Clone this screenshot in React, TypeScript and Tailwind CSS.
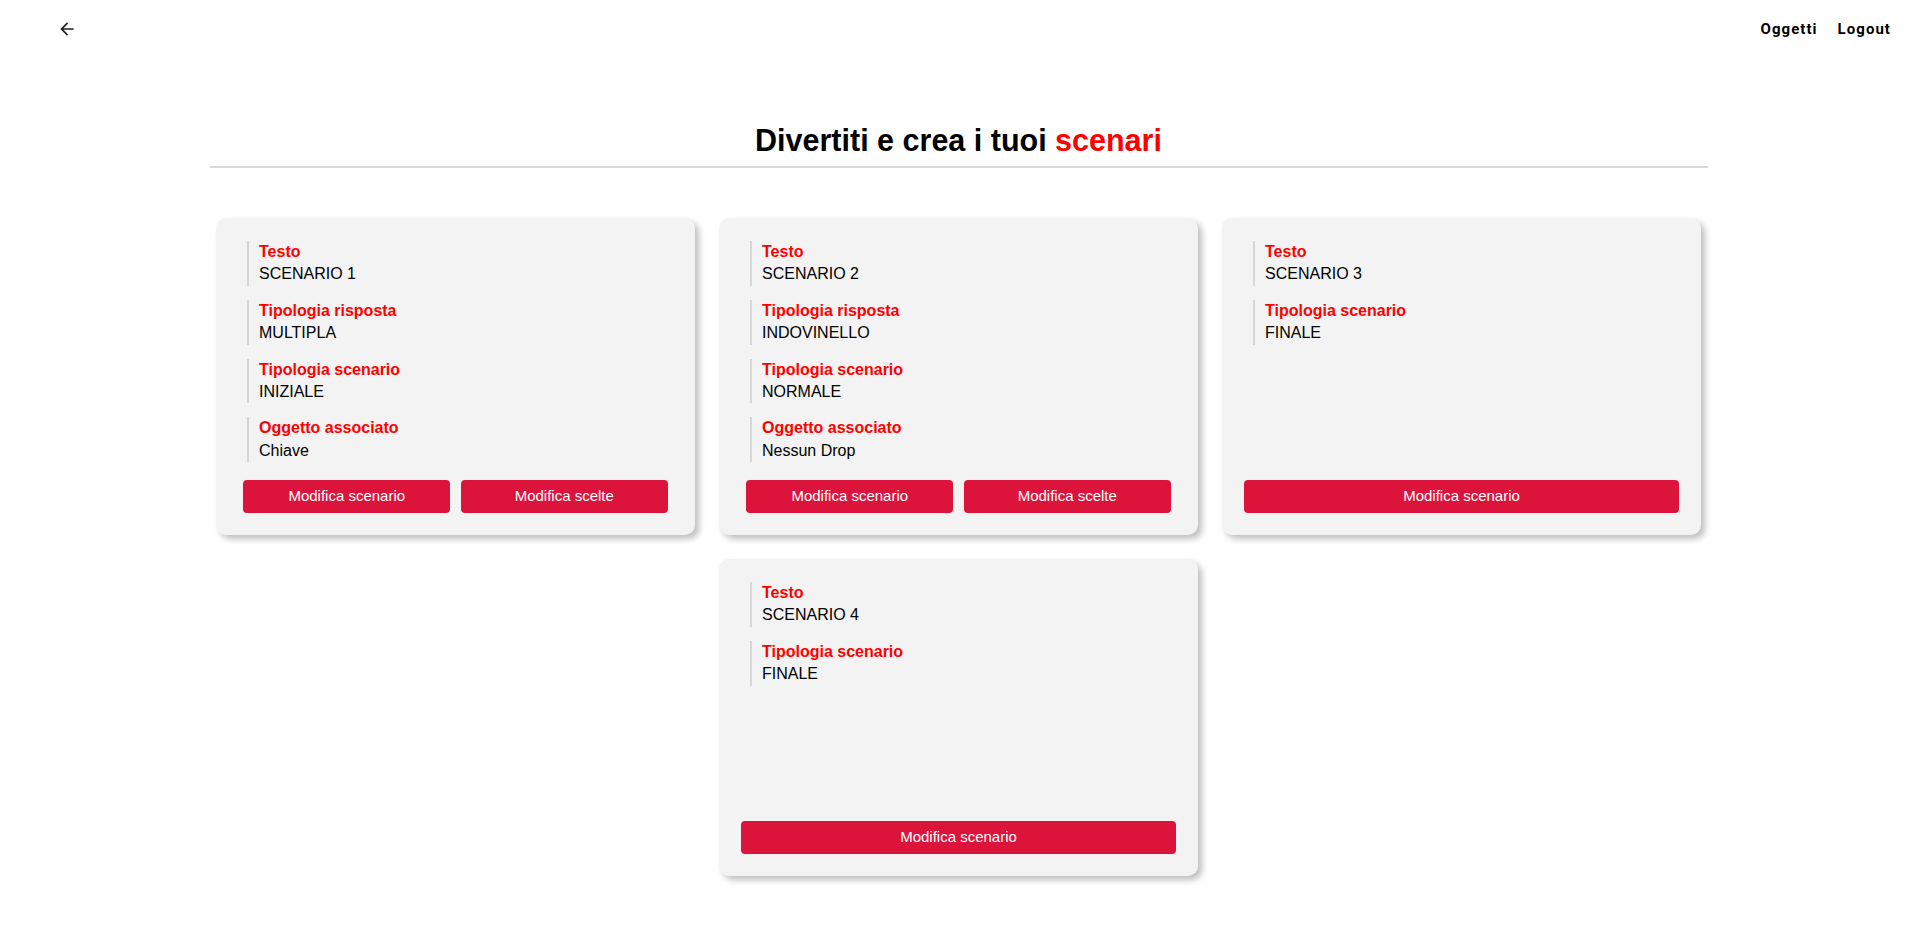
import React from "react";

interface Field {
  label: string;
  value: string;
}

interface Scenario {
  id: number;
  fields: Field[];
  scelte: boolean;
}

const SCENARI: Scenario[] = [
  {
    id: 1,
    fields: [
      { label: "Testo", value: "SCENARIO 1" },
      { label: "Tipologia risposta", value: "MULTIPLA" },
      { label: "Tipologia scenario", value: "INIZIALE" },
      { label: "Oggetto associato", value: "Chiave" },
    ],
    scelte: true,
  },
  {
    id: 2,
    fields: [
      { label: "Testo", value: "SCENARIO 2" },
      { label: "Tipologia risposta", value: "INDOVINELLO" },
      { label: "Tipologia scenario", value: "NORMALE" },
      { label: "Oggetto associato", value: "Nessun Drop" },
    ],
    scelte: true,
  },
  {
    id: 3,
    fields: [
      { label: "Testo", value: "SCENARIO 3" },
      { label: "Tipologia scenario", value: "FINALE" },
    ],
    scelte: false,
  },
  {
    id: 4,
    fields: [
      { label: "Testo", value: "SCENARIO 4" },
      { label: "Tipologia scenario", value: "FINALE" },
    ],
    scelte: false,
  },
];

function ScenarioCard({ scenario }: { scenario: Scenario }) {
  return (
    <div className="w-[479px] h-[317px] rounded-[10px] bg-[#f3f3f3] shadow-[4px_4px_6px_rgba(0,0,0,0.25)] px-[22px] pt-[23px] pb-[22px] flex flex-col">
      <div className="flex flex-col gap-[14px]">
        {scenario.fields.map((f) => (
          <div
            key={f.label}
            className="ml-[9px] border-l-2 border-[#d6d6d6] pl-[10px] text-[16px] leading-[1.4]"
          >
            <div className="font-bold text-[#ff0000]">{f.label}</div>
            <div className="text-black">{f.value}</div>
          </div>
        ))}
      </div>

      {/* Actions */}
      {scenario.scelte ? (
        <div className="mt-auto flex justify-around">
          <button className="w-[207px] h-[33px] rounded-[4px] bg-[#dc143c] text-white text-[15px]">
            Modifica scenario
          </button>
          <button className="w-[207px] h-[33px] rounded-[4px] bg-[#dc143c] text-white text-[15px]">
            Modifica scelte
          </button>
        </div>
      ) : (
        <div className="mt-auto flex">
          <button className="w-full h-[33px] rounded-[4px] bg-[#dc143c] text-white text-[15px]">
            Modifica scenario
          </button>
        </div>
      )}
    </div>
  );
}

export default function App() {
  return (
    <div className="min-h-screen bg-white font-['Liberation_Sans',Arial,sans-serif] pb-[60px]">
      {/* Top bar */}
      <header className="h-[58px] flex items-center justify-between pl-[57px] pr-[26px]">
        <button className="text-[#222]" title="Indietro">
          <svg width="20" height="20" viewBox="0 0 24 24" fill="currentColor">
            <path d="M20 11H7.83l5.59-5.59L12 4l-8 8 8 8 1.41-1.41L7.83 13H20v-2z" />
          </svg>
        </button>
        <nav className="flex items-center gap-[20px] font-['Roboto',sans-serif] font-bold text-[15px] tracking-[0.07em] text-black mt-[1px]">
          <a>Oggetti</a>
          <a>Logout</a>
        </nav>
      </header>

      {/* Title */}
      <div className="w-[1498px] mx-auto mt-[65px] border-b-2 border-[#d9d9d9] pb-[9px] text-center">
        <h1 className="text-[30.5px] leading-[34px] font-bold text-black">
          Divertiti e crea i tuoi <span className="text-[#ff0000]">scenari</span>
        </h1>
      </div>

      {/* Cards */}
      <div className="w-[1498px] mx-auto mt-[50px] flex flex-wrap justify-center gap-x-[24px] gap-y-[24px]">
        {SCENARI.map((s) => (
          <ScenarioCard key={s.id} scenario={s} />
        ))}
      </div>
    </div>
  );
}
